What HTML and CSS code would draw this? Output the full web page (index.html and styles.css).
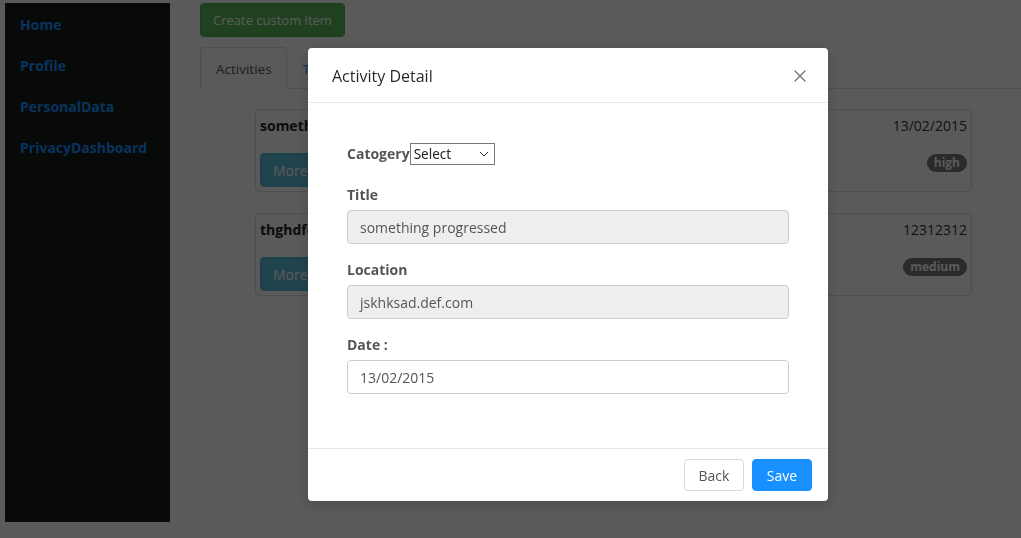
FILE: index.html
```html
<!DOCTYPE html>
<html>
<head>
<meta charset="utf-8">
<link rel="stylesheet" href="styles.css">
</head>
<body>
<div class="page">
  <nav class="sidebar">
    <a class="nav-link">Home</a>
    <a class="nav-link">Profile</a>
    <a class="nav-link">PersonalData</a>
    <a class="nav-link">PrivacyDashboard</a>
  </nav>
  <main class="content">
    <button class="btn-success">Create custom item</button>
    <ul class="tabs">
      <li class="tab active">Activities</li>
      <li class="tab">Timeline</li>
    </ul>
    <div class="cards">
      <div class="card">
        <div class="card-row">
          <span class="card-title">something progressed</span>
          <span class="card-date">13/02/2015</span>
        </div>
        <div class="card-row bottom">
          <button class="btn-info">More...</button>
          <span class="badge">high</span>
        </div>
      </div>
      <div class="card">
        <div class="card-row">
          <span class="card-title">thghdfdgfd</span>
          <span class="card-date">12312312</span>
        </div>
        <div class="card-row bottom">
          <button class="btn-info">More...</button>
          <span class="badge">medium</span>
        </div>
      </div>
    </div>
  </main>
</div>
<div class="backdrop"></div>
<div class="modal">
  <div class="modal-header">
    <span class="modal-title">Activity Detail</span>
    <svg class="close" width="14" height="14" viewBox="0 0 14 14"><path d="M1.5 1.5 L12.5 12.5 M12.5 1.5 L1.5 12.5" stroke="#777" stroke-width="1.3" fill="none"/></svg>
  </div>
  <div class="modal-body">
    <div class="form">
      <div class="cat-row">
        <span class="label">Catogery</span>
        <div class="select"><span>Select</span><svg width="10" height="6" viewBox="0 0 10 6"><path d="M1 1 L5 5 L9 1" stroke="#333" stroke-width="1" fill="none"/></svg></div>
      </div>
      <div class="group">
        <label class="label block">Title</label>
        <div class="input disabled">something progressed</div>
      </div>
      <div class="group">
        <label class="label block">Location</label>
        <div class="input disabled">jskhksad.def.com</div>
      </div>
      <div class="group">
        <label class="label block">Date :</label>
        <div class="input">13/02/2015</div>
      </div>
    </div>
  </div>
  <div class="modal-footer">
    <button class="btn-default">Back</button>
    <button class="btn-primary">Save</button>
  </div>
</div>
</body>
</html>
```
FILE: styles.css
```css
* { box-sizing: border-box; }
html, body { margin: 0; padding: 0; }
body {
  width: 1021px;
  height: 538px;
  overflow: hidden;
  background: #fff;
  font-family: "Open Sans", "Noto Sans", sans-serif;
  font-size: 14px;
  color: #333;
}
.page {
  display: flex;
  align-items: flex-start;
  padding: 3px 0 0 5px;
}
.sidebar {
  width: 165px;
  height: 519px;
  background: #171c1a;
  display: flex;
  flex-direction: column;
  padding: 12px 0 0 15px;
  gap: 21px;
}
.nav-link {
  color: #1890ff;
  font-weight: 700;
  font-size: 14px;
  line-height: 20px;
}
.content {
  flex: 1;
  margin-left: 30px;
}
button { font-family: inherit; }
.btn-success {
  display: block;
  height: 34px;
  padding: 0 12px;
  background: #5cb85c;
  border: 1px solid #4cae4c;
  border-radius: 4px;
  color: #fff;
  font-size: 13px;
}
.tabs {
  list-style: none;
  margin: 10px 0 0;
  padding: 0;
  display: flex;
  border-bottom: 1px solid #ddd;
  height: 42px;
}
.tab {
  height: 42px;
  padding: 0 14px 0 15px;
  line-height: 42px;
  color: #1890ff;
  border: 1px solid transparent;
  border-radius: 4px 4px 0 0;
  font-size: 13.5px;
}
.tab.active {
  color: #555;
  background: #fff;
  border-color: #ddd #ddd transparent;
}
.cards {
  padding: 20px 49px 0 55px;
  display: flex;
  flex-direction: column;
  gap: 21px;
}
.card {
  height: 83px;
  border: 1px solid #ddd;
  border-radius: 4px;
  padding: 5px 4px 4px 4px;
  display: flex;
  flex-direction: column;
  justify-content: space-between;
}
.card-row {
  display: flex;
  justify-content: space-between;
  align-items: center;
}
.card-title { font-weight: 700; color: #222; line-height: 22px; }
.card-date { line-height: 22px; color: #333; }
.btn-info {
  height: 34px;
  padding: 0 12px;
  background: #5bc0de;
  border: 1px solid #46b8da;
  border-radius: 4px;
  color: #fff;
  font-size: 14px;
}
.badge {
  background: #777;
  color: #fff;
  font-size: 12px;
  font-weight: 700;
  line-height: 18px;
  padding: 0 7px;
  border-radius: 10px;
  align-self: flex-start;
  margin-top: 1px;
}
.backdrop {
  position: fixed;
  inset: 0;
  background: rgba(0, 0, 0, 0.647);
}
.modal {
  position: absolute;
  left: 308px;
  top: 48px;
  width: 520px;
  height: 453px;
  background: #fff;
  border-radius: 4px;
  box-shadow: 0 4px 12px rgba(0, 0, 0, 0.15);
  display: flex;
  flex-direction: column;
}
.modal-header {
  height: 55px;
  padding: 2px 21px 0 24px;
  display: flex;
  align-items: center;
  justify-content: space-between;
  border-bottom: 1px solid #e8e8e8;
}
.modal-title {
  font-size: 16px;
  color: rgba(0, 0, 0, 0.85);
  font-family: "Open Sans", "Noto Sans", sans-serif;
}
.modal-body {
  flex: 1;
  padding: 24px;
}
.form { padding: 16px 15px 0; }
.cat-row {
  display: flex;
  align-items: center;
  height: 22px;
  margin-bottom: 20px;
}
.label {
  font-weight: 700;
  color: #555;
  font-size: 14px;
  line-height: 20px;
}
.label.block { display: block; margin-bottom: 5px; }
.select {
  width: 85px;
  height: 22px;
  border: 1px solid #767676;
  display: flex;
  align-items: center;
  justify-content: space-between;
  padding: 0 5px 0 3px;
  font-family: "Noto Sans", "Liberation Sans", sans-serif;
  font-size: 13.5px;
  color: #222;
  background: #fff;
}
.group { margin-bottom: 16px; }
.input {
  height: 34px;
  border: 1px solid #ccc;
  border-radius: 4px;
  padding: 0 12px;
  line-height: 33px;
  color: #555;
  font-size: 14px;
  background: #fff;
}
.input.disabled { background: #eee; }
.modal-footer {
  height: 53px;
  border-top: 1px solid #e8e8e8;
  display: flex;
  justify-content: flex-end;
  align-items: center;
  gap: 8px;
  padding: 0 16px;
}
.btn-default, .btn-primary {
  height: 32px;
  width: 60px;
  border-radius: 4px;
  font-size: 14px;
}
.btn-default {
  background: #fff;
  border: 1px solid #d9d9d9;
  color: #555;
}
.btn-primary {
  background: #1890ff;
  border: 1px solid #1890ff;
  color: #fff;
}
```
